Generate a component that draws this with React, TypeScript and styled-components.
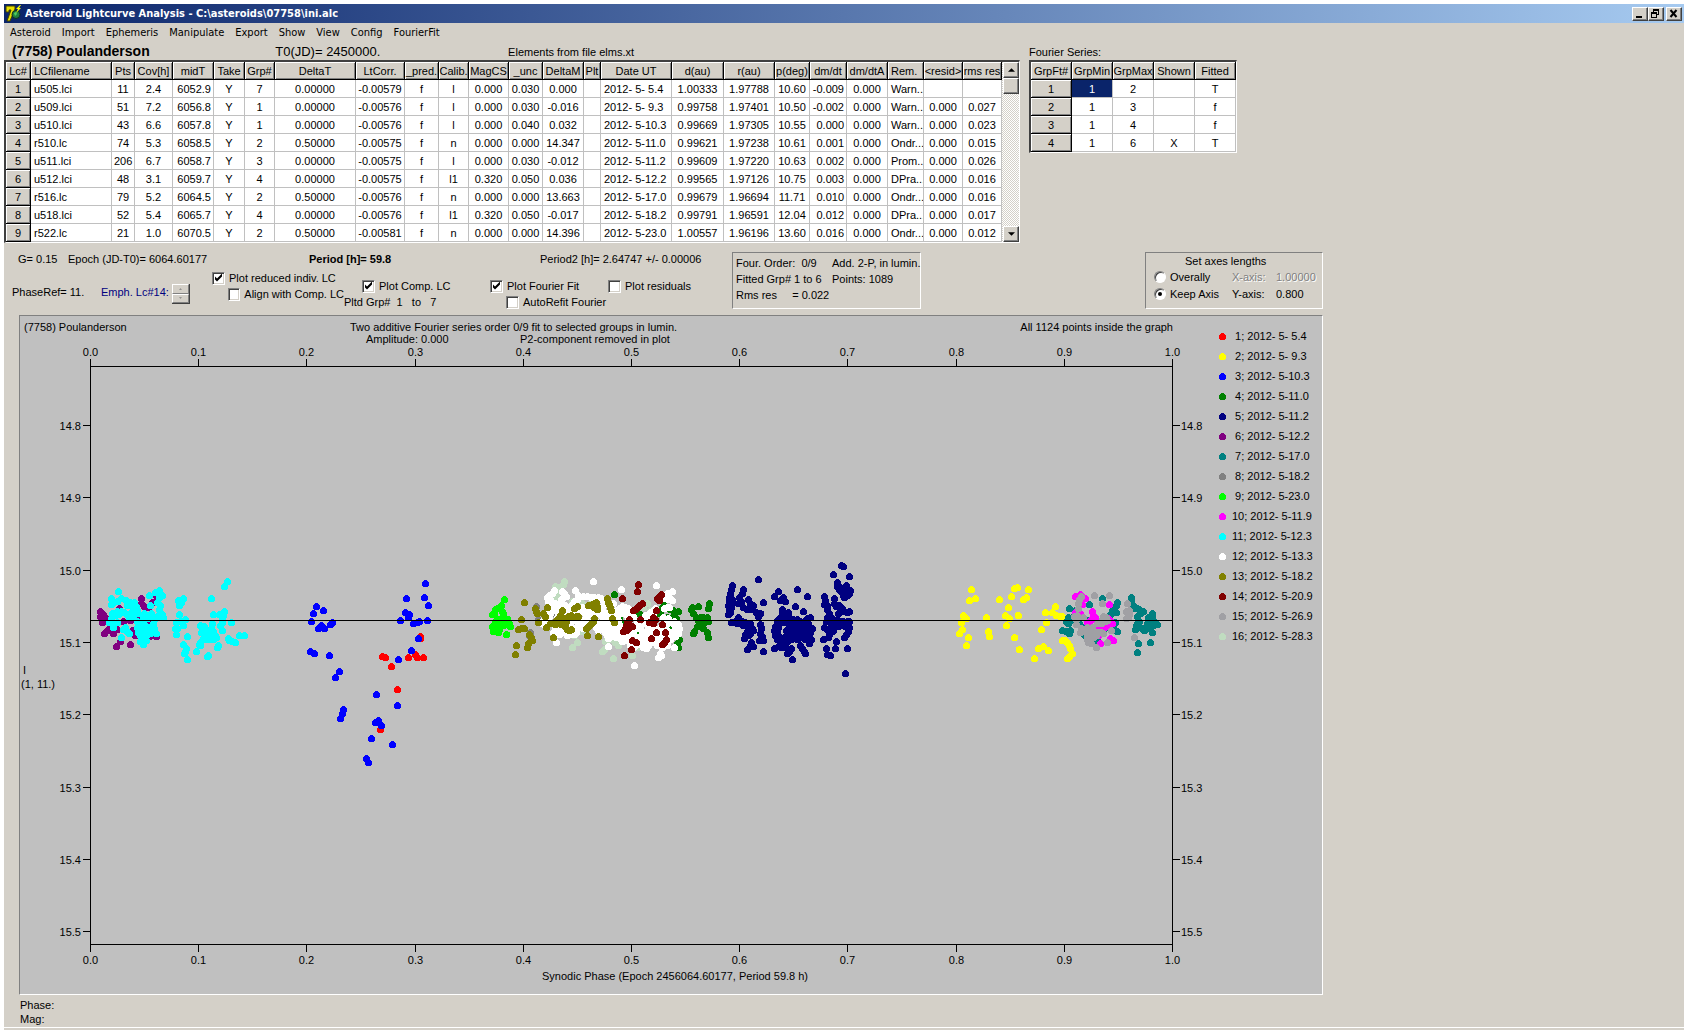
import React from 'react';
import styled, { createGlobalStyle, css } from 'styled-components';

const face = '#d4d0c8';
const shadow = '#808080';
const dark = '#404040';
const uiFont = '"Liberation Sans", Arial, sans-serif';
const titleFont = '"DejaVu Sans Condensed", "DejaVu Sans", Tahoma, sans-serif';

const GlobalStyle = createGlobalStyle`
  * { box-sizing: border-box; }
  body { margin: 0; background: #fff; font: 11px/14px ${uiFont}; color: #000; }
  button, input { font: inherit; color: inherit; }
`;

const raised = css`
  background: ${face};
  border: 1px solid;
  border-color: #fff ${dark} ${dark} #fff;
  box-shadow: inset -1px -1px ${shadow};
`;

/* ---------- window frame ---------- */

const Window = styled.div`
  display: flex;
  flex-direction: column;
  min-height: 100vh;
  background: ${face};
  border: solid #fff;
  border-width: 4px 4px 0;
`;

const TitleBar = styled.header`
  display: flex;
  align-items: center;
  height: 19px;
  padding: 0 2px 0 1px;
  background: linear-gradient(to right, #0a246a, #a6caf0);
  color: #fff;
`;

const TitleText = styled.h1`
  flex: 1;
  margin: 0 0 0 3px;
  font: bold 11px/18px ${titleFont};
  white-space: nowrap;
`;

const CaptionButton = styled.button<{ $gap?: number }>`
  ${raised}
  display: flex;
  width: 16px;
  height: 14px;
  padding: 0;
  margin-left: ${(p) => p.$gap ?? 0}px;
`;

const MenuBar = styled.nav`
  display: flex;
  gap: 11px;
  height: 20px;
  padding-left: 6px;
`;

const MenuButton = styled.button`
  padding: 0;
  border: 0;
  background: none;
  font: 11px/20px ${titleFont};
`;

/* ---------- data grids ---------- */

const Tables = styled.div`
  display: flex;
  gap: 9px;
`;

const TableBlock = styled.section`
  display: flex;
  flex-direction: column;
`;

const Heading = styled.div`
  display: flex;
  align-items: center;
  height: 17px;
  white-space: nowrap;
`;

const AsteroidName = styled.h2`
  width: 264px;
  margin: 0;
  padding-left: 8px;
  font: bold 14px/17px ${uiFont};
`;

const Epoch0 = styled.span`
  width: 234px;
  font-size: 13px;
`;

const Sunken = styled.div`
  display: flex;
  border: solid;
  border-width: 2px 1px 1px 2px;
  border-color: ${dark} #fff #fff ${dark};
  background: #fff;
`;

const Grid = styled.table<{ $width: number }>`
  width: ${(p) => p.$width}px;
  table-layout: fixed;
  border-collapse: separate;
  border-spacing: 0;
`;

type Align = 'left' | 'center' | 'right';

const HeadCell = styled.th<{ $align?: Align }>`
  height: 18px;
  padding: 0 ${(p) => (p.$align === 'left' ? 3 : 0)}px;
  overflow: hidden;
  background: ${face};
  border: solid #000;
  border-width: 0 1px 1px 0;
  box-shadow: inset 1px 1px #fff, inset -1px -1px ${shadow};
  font-weight: normal;
  line-height: 16px;
  text-align: ${(p) => p.$align ?? 'center'};
  white-space: nowrap;
`;

const Cell = styled.td<{ $align?: Align; $selected?: boolean }>`
  height: 18px;
  padding: 0 ${(p) => (p.$align === 'left' ? 3 : 2)}px;
  overflow: hidden;
  border: solid #c0c0c0;
  border-width: 0 1px 1px 0;
  background: ${(p) => (p.$selected ? '#0a246a' : '#fff')};
  color: ${(p) => (p.$selected ? '#fff' : '#000')};
  line-height: 16px;
  text-align: ${(p) => p.$align ?? 'center'};
  white-space: pre;
`;

const ScrollBar = styled.div`
  display: flex;
  flex-direction: column;
  width: 17px;
  padding-left: 1px;
  background: repeating-conic-gradient(#fff 0 25%, ${face} 0 50%) 0 0 / 2px 2px;
`;

const ScrollButton = styled.button`
  ${raised}
  display: flex;
  align-items: center;
  justify-content: center;
  height: 16px;
  padding: 0;
`;

const Thumb = styled.div`
  ${raised}
  height: 16px;
  margin-bottom: auto;
`;

/* ---------- options strip ---------- */

const Options = styled.section`
  display: flex;
  height: 72px;
  padding-top: 9px;
  white-space: pre;
`;

const Controls = styled.div`
  width: 728px;
`;

const Summary = styled.div`
  display: grid;
  grid-template-columns: 50px 241px 231px auto;
  padding-left: 14px;
`;

const Settings = styled.div`
  display: grid;
  grid-template-columns: 89px 71px 40px 132px 146px 118px auto;
  padding: 4px 0 0 8px;
  line-height: 16px;
`;

const Stack = styled.div<{ $top?: number; $navy?: boolean }>`
  padding-top: ${(p) => p.$top ?? 0}px;
  color: ${(p) => (p.$navy ? '#000080' : '#000')};
`;

const Option = styled.label<{ $indent?: number }>`
  display: flex;
  align-items: center;
  gap: 4px;
  height: 16px;
  margin-left: ${(p) => p.$indent ?? 0}px;
`;

const CheckBox = styled.input`
  appearance: none;
  width: 13px;
  height: 13px;
  margin: 0;
  border: 1px solid;
  border-color: ${shadow} #fff #fff ${shadow};
  box-shadow: inset 1px 1px ${dark}, inset -1px -1px ${face};
  background: #fff;

  &:checked::before {
    content: '';
    display: block;
    width: 11px;
    height: 11px;
    background: #000;
    clip-path: polygon(2px 4px, 4px 6px, 9px 1px, 9px 4px, 4px 9px, 2px 7px);
  }
`;

const Radio = styled.input`
  appearance: none;
  display: grid;
  place-items: center;
  width: 12px;
  height: 12px;
  margin: 0;
  border: 1px solid;
  border-color: ${shadow} #fff #fff ${shadow};
  border-radius: 50%;
  box-shadow: inset 1px 1px ${dark};
  background: #fff;

  &:checked::before {
    content: '';
    width: 4px;
    height: 4px;
    border-radius: 50%;
    background: #000;
  }
`;

const Spinner = styled.div`
  display: flex;
  flex-direction: column;
  width: 18px;
  height: 20px;
  margin-top: 14px;
  border: solid ${dark};
  border-width: 0 1px 1px 0;
`;

const SpinButton = styled.button`
  ${raised}
  display: flex;
  flex: 1;
  align-items: center;
  justify-content: center;
  padding: 0;
  border-color: #fff ${shadow} ${shadow} #fff;
  box-shadow: none;
`;

const InsetBox = styled.div<{ $width: number; $gap?: number }>`
  width: ${(p) => p.$width}px;
  height: 57px;
  margin-left: ${(p) => p.$gap ?? 0}px;
  padding: 2px 0 0 3px;
  border: 1px solid;
  border-color: ${shadow} #fff #fff ${shadow};
  line-height: 16px;
`;

const FitGrid = styled.div`
  display: grid;
  grid-template-columns: 96px auto;
`;

const AxesTitle = styled.div`
  padding-left: 36px;
  line-height: 13px;
`;

const AxesRow = styled.div<{ $off?: boolean }>`
  display: grid;
  grid-template-columns: 78px 44px 44px;
  align-items: center;
  height: 17px;
  padding-left: 5px;

  & > :nth-child(n + 2) {
    color: ${(p) => (p.$off ? shadow : '#000')};
    text-shadow: ${(p) => (p.$off ? '1px 1px #fff' : 'none')};
  }
`;

const ValueInput = styled.input`
  width: 44px;
  padding: 0;
  border: 0;
  background: none;
`;

/* ---------- graph ---------- */

const GraphPanel = styled.main`
  width: 1304px;
  max-width: calc(100% - 15px);
  margin-left: 15px;
  background: #c0c0c0;
  border: 1px solid;
  border-color: ${shadow} #fff #fff ${shadow};
`;

const Graph = styled.svg`
  display: block;
  width: 100%;
  height: auto;
  font: 11px ${uiFont};

  text { white-space: pre; }
  line { stroke: #000; shape-rendering: crispEdges; }
  circle { shape-rendering: crispEdges; }
`;

const StatusArea = styled.footer`
  flex: 1;
  padding: 3px 0 0 16px;
  margin-bottom: 2px;
  border-bottom: 1px solid #fff;
`;

/* ---------- contents ---------- */

type Column = { name: string; width: number; align?: Align; headAlign?: Align };

const lcColumns: Column[] = [
  { name: 'Lc#', width: 25 },
  { name: 'LCfilename', width: 81, align: 'left', headAlign: 'left' },
  { name: 'Pts', width: 23 },
  { name: 'Cov[h]', width: 38 },
  { name: 'midT', width: 41, align: 'right' },
  { name: 'Take', width: 31 },
  { name: 'Grp#', width: 30 },
  { name: 'DeltaT', width: 81 },
  { name: 'LtCorr.', width: 49 },
  { name: '_pred.', width: 34 },
  { name: 'Calib.', width: 30 },
  { name: 'MagCS', width: 40 },
  { name: '_unc', width: 34 },
  { name: 'DeltaM', width: 41 },
  { name: 'Plt', width: 17 },
  { name: 'Date UT', width: 71, align: 'left' },
  { name: 'd(au)', width: 52 },
  { name: 'r(au)', width: 51 },
  { name: 'p(deg)', width: 35 },
  { name: 'dm/dt', width: 37, align: 'right' },
  { name: 'dm/dtA', width: 41 },
  { name: 'Rem.', width: 36, align: 'left', headAlign: 'left' },
  { name: '<resid>', width: 39 },
  { name: 'rms res', width: 39 },
];

const lcRows = [
  '1|u505.lci|11|2.4|6052.9|Y|7|0.00000|-0.00579|f|l|0.000|0.030|0.000||2012- 5- 5.4|1.00333|1.97788|10.60|-0.009|0.000|Warn..||',
  '2|u509.lci|51|7.2|6056.8|Y|1|0.00000|-0.00576|f|l|0.000|0.030|-0.016||2012- 5- 9.3|0.99758|1.97401|10.50|-0.002|0.000|Warn..|0.000|0.027',
  '3|u510.lci|43|6.6|6057.8|Y|1|0.00000|-0.00576|f|l|0.000|0.040|0.032||2012- 5-10.3|0.99669|1.97305|10.55|0.000|0.000|Warn..|0.000|0.023',
  '4|r510.lc|74|5.3|6058.5|Y|2|0.50000|-0.00575|f|n|0.000|0.000|14.347||2012- 5-11.0|0.99621|1.97238|10.61|0.001|0.000|Ondr...|0.000|0.015',
  '5|u511.lci|206|6.7|6058.7|Y|3|0.00000|-0.00575|f|l|0.000|0.030|-0.012||2012- 5-11.2|0.99609|1.97220|10.63|0.002|0.000|Prom...|0.000|0.026',
  '6|u512.lci|48|3.1|6059.7|Y|4|0.00000|-0.00575|f|l1|0.320|0.050|0.036||2012- 5-12.2|0.99565|1.97126|10.75|0.003|0.000|DPra...|0.000|0.016',
  '7|r516.lc|79|5.2|6064.5|Y|2|0.50000|-0.00576|f|n|0.000|0.000|13.663||2012- 5-17.0|0.99679|1.96694|11.71|0.010|0.000|Ondr...|0.000|0.016',
  '8|u518.lci|52|5.4|6065.7|Y|4|0.00000|-0.00576|f|l1|0.320|0.050|-0.017||2012- 5-18.2|0.99791|1.96591|12.04|0.012|0.000|DPra...|0.000|0.017',
  '9|r522.lc|21|1.0|6070.5|Y|2|0.50000|-0.00581|f|n|0.000|0.000|14.396||2012- 5-23.0|1.00557|1.96196|13.60|0.016|0.000|Ondr...|0.000|0.012',
].map((r) => r.split('|'));

const fourierColumns: Column[] = ['GrpFt#', 'GrpMin', 'GrpMax', 'Shown', 'Fitted'].map((name) => ({ name, width: 41 }));
const fourierRows = ['1|1|2||T', '2|1|3||f', '3|1|4||f', '4|1|6|X|T'].map((r) => r.split('|'));

function DataGrid({ columns, rows, selected }: { columns: Column[]; rows: string[][]; selected?: [number, number] }) {
  return (
    <Grid $width={columns.reduce((sum, c) => sum + c.width, 0)}>
      <colgroup>
        {columns.map((c) => (
          <col key={c.name} width={c.width} />
        ))}
      </colgroup>
      <thead>
        <tr>
          {columns.map((c) => (
            <HeadCell key={c.name} scope="col" $align={c.headAlign}>
              {c.name}
            </HeadCell>
          ))}
        </tr>
      </thead>
      <tbody>
        {rows.map((row, r) => (
          <tr key={row[0]}>
            {row.map((value, c) =>
              c === 0 ? (
                <HeadCell key={c} scope="row">
                  {value}
                </HeadCell>
              ) : (
                <Cell key={c} $align={columns[c].align} $selected={selected?.[0] === r && selected?.[1] === c}>
                  {value}
                </Cell>
              ),
            )}
          </tr>
        ))}
      </tbody>
    </Grid>
  );
}

const legend: [string, string][] = [
  [' 1; 2012- 5- 5.4', '#ff0000'],
  [' 2; 2012- 5- 9.3', '#ffff00'],
  [' 3; 2012- 5-10.3', '#0000ff'],
  [' 4; 2012- 5-11.0', '#008000'],
  [' 5; 2012- 5-11.2', '#000080'],
  [' 6; 2012- 5-12.2', '#800080'],
  [' 7; 2012- 5-17.0', '#008080'],
  [' 8; 2012- 5-18.2', '#808080'],
  [' 9; 2012- 5-23.0', '#00ff00'],
  ['10; 2012- 5-11.9', '#ff00ff'],
  ['11; 2012- 5-12.3', '#00ffff'],
  ['12; 2012- 5-13.3', '#ffffff'],
  ['13; 2012- 5-18.2', '#808000'],
  ['14; 2012- 5-20.9', '#800000'],
  ['15; 2012- 5-26.9', '#a0a0a4'],
  ['16; 2012- 5-28.3', '#c0dcc0'],
];

/* Samples are "x,y" pairs in thirds of a plot unit, counted from the series' own origin. */
type Series = { id: number; x: number; y: number; samples: string };

const series: Series[] = [
  { id: 16, x: 470, y: 560, samples: '281,63 278,73 256,78 254,90 258,105 252,118 268,80 305,122 335,128 350,140 530,130 520,142 330,212 322,247 307,262 312,226 395,274 402,268 430,295 404,244 420,238 436,246 445,254 487,286 500,262 540,150 545,165 320,200 345,215 360,130' },
  { id: 1, x: 80, y: 560, samples: '1021,227 1019,234 905,289 916,292 985,292 1006,281 1012,292 1030,292 934,319 952,388 901,508' },
  { id: 2, x: 930, y: 560, samples: '124,88 118,121 136,115 208,118 244,109 251,85 260,82 295,88 289,112 280,118 235,142 100,166 107,175 92,187 95,208 86,219 115,232 109,256 169,172 175,214 178,229 226,166 238,174 229,196 265,166 253,232 268,268 313,295 374,139 346,157 365,157 379,166 389,167 397,168 349,187 334,208 325,265 340,259 355,271 397,241 404,241 410,247 416,254 421,263 425,280 418,287 412,293' },
  { id: 3, x: 80, y: 560, samples: '1036,70 1033,112 979,115 1045,136 709,139 730,151 700,160 694,184 757,187 751,193 724,196 715,205 733,205 691,274 703,280 748,286 778,334 766,352 790,448 787,460 781,475 976,157 988,163 985,170 961,181 1000,190 1010,187 1018,184 1042,181 1015,235 994,271 955,298 889,403 952,436 895,481 886,487 904,496 874,535 937,553 859,595 865,607' },
  { id: 4, x: 470, y: 560, samples: '433,103 574,103 575,140 582,135 600,148 607,170 618,175 625,154 612,172 510,162 520,172 496,155 628,238 625,262 622,250 665,142 684,139 718,130 715,145 663,148 668,160 677,172 685,180 690,170 700,170 712,172 714,183 700,190 690,192 680,198 672,212 669,219 700,205 710,215 714,230 560,160 570,155 590,170 462,205 447,175 455,190 480,228 470,150 505,220 565,150 600,200 610,150 545,225' },
  { id: 5, x: 700, y: 550, samples: '97,106 92,118 90,128 86,140 96,148 86,152 95,160 85,165 94,172 88,180 85,192 90,186 130,118 126,130 118,142 122,154 115,160 128,172 145,148 150,160 160,166 155,176 140,178 168,186 180,190 175,198 188,157 175,88 94,217 106,214 115,200 120,210 112,220 125,212 135,215 128,225 140,220 150,218 145,230 155,235 140,242 158,240 150,250 135,252 145,256 133,265 180,222 184,234 180,248 186,258 176,271 189,271 190,304 152,276 150,286 158,287 142,298 233,124 223,139 292,118 322,139 250,142 240,150 256,154 286,169 310,184 247,178 245,190 265,187 255,198 240,202 232,210 270,205 280,208 290,206 300,212 320,205 331,202 315,210 325,220 240,215 252,215 265,216 278,220 290,218 302,222 224,228 234,230 221,240 230,246 224,256 236,258 232,268 252,260 262,256 270,250 258,240 268,232 280,235 276,245 288,230 292,242 286,252 300,236 305,248 312,238 320,232 335,235 330,246 318,250 325,258 333,266 328,278 316,268 305,262 292,266 282,262 272,268 260,272 250,274 298,258 288,226 308,228 221,295 235,288 243,292 258,292 272,295 268,302 262,310 301,286 306,294 311,302 314,310 277,328 373,139 374,150 372,162 380,165 382,178 386,188 403,145 402,158 408,168 418,164 425,175 433,183 446,184 440,185 413,190 392,200 400,206 380,202 378,212 390,215 402,215 412,208 420,212 430,214 442,213 447,214 372,232 382,238 390,232 396,244 388,252 384,260 400,240 404,228 414,228 425,225 436,228 446,232 444,242 438,252 433,260 370,268 409,274 379,295 406,295 442,295 380,313 391,316 436,370 422,46 428,49 400,73 448,79 412,97 412,108 420,112 428,114 438,104 440,114 422,122 432,124 442,124 450,121 430,134 440,134 432,140 446,130 418,118' },
  { id: 6, x: 80, y: 560, samples: '61,154 70,161 61,168 76,170 66,178 67,187 78,180 73,219 80,211 88,205 100,219 112,206 96,210 107,259 121,242 151,253 184,115 184,130 191,138 221,103 215,127 117,143 164,225 156,210 206,228 227,228 200,184 178,170 150,180 130,184 205,140 232,115' },
  { id: 7, x: 930, y: 560, samples: '478,133 515,115 418,145 435,150 560,125 557,135 553,145 558,155 545,150 540,162 413,172 408,182 430,180 425,172 415,190 397,211 409,212 420,210 416,220 447,190 455,200 562,214 555,185 548,195 540,205 530,200 520,210 500,238 495,245 487,250 460,220 465,225 535,190 603,112 603,120 598,125 608,135 612,145 622,145 628,148 630,158 640,153 620,168 655,172 665,168 667,160 626,182 662,180 668,196 675,186 682,193 622,190 650,190 618,195 615,208 635,205 642,210 665,217 625,250 661,247 622,277 654,205 470,180 480,195' },
  { id: 8, x: 470, y: 560, samples: '197,138 194,145 179,216 203,178 178,225 250,160' },
  { id: 9, x: 470, y: 560, samples: '103,118 92,136 82,143 75,148 71,163 67,163 95,154 100,160 87,178 75,183 85,187 98,180 112,177 118,190 120,199 100,195 90,198 78,195 66,199 75,205 87,208 70,213 85,217 109,223 105,190' },
  { id: 10, x: 930, y: 560, samples: '451,103 436,109 466,115 455,133 445,158 436,155 451,160 487,154 490,165 495,172 470,187 480,180 500,185 510,195 515,200 522,202 530,198 538,192 543,182 535,175 545,188 538,133 495,208 510,250 541,235 549,241 505,225 480,232 460,110 500,215' },
  { id: 11, x: 80, y: 560, samples: '115,94 94,115 94,131 122,115 110,122 100,126 137,121 150,127 163,127 142,136 155,138 168,138 110,152 122,152 131,157 95,160 104,165 115,162 92,175 86,187 100,190 110,185 99,201 140,162 150,160 160,155 170,150 175,160 148,172 160,172 170,182 182,185 190,175 180,195 170,202 195,195 205,168 212,160 200,175 215,172 192,160 128,207 142,213 148,219 135,200 124,232 238,91 247,106 237,112 226,97 208,106 230,125 241,136 211,136 236,148 246,162 248,170 232,168 222,178 218,190 222,205 229,219 214,205 205,210 195,210 184,215 190,225 200,222 210,218 180,225 175,215 181,244 190,252 199,241 208,200 188,205 310,115 295,121 304,126 298,136 298,163 316,178 289,187 299,182 308,196 284,205 292,204 289,223 322,229 310,253 319,265 315,272 313,280 322,298 442,64 433,79 394,115 433,154 400,163 418,163 430,165 427,175 425,186 452,187 397,190 420,195 361,196 373,198 366,205 364,215 392,205 384,212 375,216 400,213 394,222 404,225 384,226 377,236 390,238 400,236 408,230 370,235 427,211 361,245 358,252 361,256 349,274 415,256 411,262 385,284 380,288 445,234 448,240 457,243 464,245 478,226 493,226' },
  { id: 12, x: 470, y: 560, samples: '370,64 559,76 454,88 316,91 253,90 247,100 238,105 232,112 240,118 234,122 275,92 282,100 288,108 280,112 272,118 268,128 262,138 255,128 248,136 258,148 265,155 245,150 240,158 230,156 238,168 226,170 218,180 215,190 222,192 228,180 236,182 325,105 338,107 350,108 362,112 372,110 384,110 392,115 398,120 402,128 320,118 312,124 318,135 305,132 296,140 286,136 278,142 272,150 282,155 292,150 288,165 300,158 308,165 298,175 310,180 300,190 290,182 280,172 262,170 270,185 262,198 255,205 250,215 262,215 268,222 275,210 285,215 290,225 302,222 312,222 318,215 312,205 300,205 259,247 322,160 330,152 340,148 335,140 345,160 350,150 356,162 364,158 372,165 382,160 392,165 402,160 345,175 352,180 340,182 325,190 320,180 332,202 340,205 375,180 370,190 382,185 378,200 388,195 398,190 392,205 402,202 385,210 410,200 405,190 400,175 412,175 412,160 395,145 398,135 420,165 428,155 438,150 448,145 456,138 465,142 473,145 430,130 442,165 452,160 462,158 470,165 480,160 488,168 475,175 445,180 440,190 450,195 445,205 440,215 446,225 438,232 430,220 422,228 415,235 410,225 405,215 418,212 428,208 420,200 425,190 455,215 462,225 450,235 455,242 468,232 472,240 482,222 490,215 498,205 495,195 500,185 505,195 510,205 515,215 505,232 500,245 495,255 488,262 480,255 512,240 520,232 512,252 525,245 522,258 528,265 518,262 535,255 540,245 530,235 522,222 528,212 540,215 535,200 525,190 530,180 520,178 525,165 535,165 540,155 550,165 550,200 555,230 555,245 560,255 565,240 562,230 572,225 568,212 575,210 570,200 582,200 590,210 585,225 580,240 592,245 600,238 595,225 600,215 610,215 605,228 616,228 625,218 628,205 625,192 615,198 608,190 612,182 600,185 592,190 588,180 580,172 595,175 582,145 590,142 598,140 605,94 590,100 598,110 585,115 595,118 607,121 555,145 548,150 548,162 574,285 565,290 570,280 575,262 590,255 612,262 415,259 493,316' },
  { id: 13, x: 470, y: 560, samples: '163,127 232,142 194,145 197,154 200,160 219,160 226,169 154,178 203,187 229,202 161,203 152,205 145,208 178,222 182,232 187,239 175,248 172,260 139,256 136,283 250,232 246,190 255,182 262,176 270,165 275,172 266,186 274,193 281,186 255,192 284,199 290,208 298,209 304,208 295,167 303,165 310,170 318,168 325,168 320,139 312,143 276,150 355,136 365,133 372,130 377,127 372,142 381,139 382,147 412,115 415,125 418,133 421,142 424,150 373,175 370,184 364,188 360,193 354,198 348,203 352,226 385,229 427,175 433,187 240,190 288,182' },
  { id: 14, x: 470, y: 560, samples: '505,73 502,94 457,115 574,103 566,108 562,115 566,121 515,130 507,136 500,141 494,146 488,150 557,151 476,178 472,186 468,195 464,203 460,212 478,196 485,199 475,205 467,210 511,178 550,172 555,177 547,182 538,187 549,190 575,193 559,217 586,217 544,235 589,238 582,245 577,253 487,240 497,247 484,268 463,286' },
  { id: 15, x: 930, y: 560, samples: '493,106 538,106 515,130 453,108 447,118 444,128 445,145 432,168 442,165 438,178 439,192 460,170 590,130 588,152 598,150 598,162 587,175 595,170 520,168 528,172 515,178 525,182 512,188 532,180 500,190 452,205 450,215 462,208 470,200 478,205 485,200 490,210 478,215 468,215 472,228 470,238 480,225 490,220 505,215 512,215 520,218 497,225 475,245 482,250 499,260 532,247 543,209 613,232 488,230' },
];

const plot = { left: 70, right: 1152, top: 50, bottom: 628, meanY: 304 };
const phases = Array.from({ length: 11 }, (_, i) => i);
const magnitudes = Array.from({ length: 8 }, (_, i) => i);

function Lightcurve() {
  return (
    <Graph viewBox="0 0 1302 678" role="img" aria-label="Lightcurve plot">
      <text x="4" y="15">(7758) Poulanderson</text>
      <text x="330" y="15">Two additive Fourier series order 0/9 fit to selected groups in lumin.</text>
      <text x="346" y="27">Amplitude: 0.000</text>
      <text x="500" y="27">P2-component removed in plot</text>
      <text x="1153" y="15" textAnchor="end">All 1124 points inside the graph</text>

      {series.map((s) => (
        <g key={s.id} fill={legend[s.id - 1][1]}>
          {s.samples.split(' ').map((pair, i) => {
            const [x, y] = pair.split(',').map(Number);
            return <circle key={i} cx={Math.round(s.x - 20 + x / 3) + 0.5} cy={Math.round(s.y - 316 + y / 3) + 0.5} r="3.5" />;
          })}
        </g>
      ))}

      <line x1={plot.left} x2={plot.right + 1} y1={plot.top + 0.5} y2={plot.top + 0.5} />
      <line x1={plot.left} x2={plot.right + 1} y1={plot.bottom + 0.5} y2={plot.bottom + 0.5} />
      <line x1={plot.left} x2={plot.right + 1} y1={plot.meanY + 0.5} y2={plot.meanY + 0.5} />
      <line x1={plot.left + 0.5} x2={plot.left + 0.5} y1={plot.top} y2={plot.bottom} />
      <line x1={plot.right + 0.5} x2={plot.right + 0.5} y1={plot.top} y2={plot.bottom} />

      {phases.map((i) => {
        const x = Math.round(plot.left + i * 108.2) + 0.5;
        return (
          <g key={i} textAnchor="middle">
            <line x1={x} x2={x} y1={plot.top - 7} y2={plot.top} />
            <line x1={x} x2={x} y1={plot.bottom} y2={plot.bottom + 8} />
            <text x={x} y="40">{(i / 10).toFixed(1)}</text>
            <text x={x} y="648">{(i / 10).toFixed(1)}</text>
          </g>
        );
      })}
      {magnitudes.map((i) => {
        const y = Math.round(109 + i * 72.3) + 0.5;
        return (
          <g key={i}>
            <line x1={plot.left - 7} x2={plot.left} y1={y} y2={y} />
            <line x1={plot.right} x2={plot.right + 8} y1={y} y2={y} />
            <text x="61" y={y + 4} textAnchor="end">{(14.8 + i / 10).toFixed(1)}</text>
            <text x="1161" y={y + 4}>{(14.8 + i / 10).toFixed(1)}</text>
          </g>
        );
      })}

      <text x="3" y="358">I</text>
      <text x="1" y="372">(1, 11.)</text>
      <text x="522" y="664">Synodic Phase (Epoch 2456064.60177, Period 59.8 h)</text>

      {legend.map(([label, color], i) => (
        <g key={label}>
          <circle cx="1202.5" cy={20.5 + i * 20} r="3.5" fill={color} />
          <text x="1212" y={24 + i * 20}>{label}</text>
        </g>
      ))}
    </Graph>
  );
}

const menus = ['Asteroid', 'Import', 'Ephemeris', 'Manipulate', 'Export', 'Show', 'View', 'Config', 'FourierFit'];

function Arrow({ up, size, color = '#000' }: { up?: boolean; size: number; color?: string }) {
  return (
    <svg width={size * 2 - 1} height={size} viewBox={`0 0 ${size * 2} ${size}`} aria-hidden="true">
      <path d={up ? `M0 ${size}L${size} 0L${size * 2} ${size}Z` : `M0 0H${size * 2}L${size} ${size}Z`} fill={color} />
    </svg>
  );
}

function AppIcon() {
  return (
    <svg width="17" height="17" viewBox="0 0 17 17" aria-hidden="true">
      <path d="M1 1h9v3L5 16H2L6 5H4v2H1Z" fill="#e8e000" stroke="#404000" />
      <circle cx="11" cy="9.500" r="4" fill="#208040" stroke="#103020" />
      <path d="M9 8l2-1 1 2-2 2Z" fill="#50d060" />
      <path d="M15 0l-4 4h2l-2 4 5-5h-2l2-3Z" fill="#ffff00" />
    </svg>
  );
}

export default function App() {
  return (
    <>
      <GlobalStyle />
      <Window>
        <TitleBar>
          <AppIcon />
          <TitleText>Asteroid Lightcurve Analysis - C:\asteroids\07758\ini.alc</TitleText>
          <CaptionButton aria-label="Minimize">
            <svg width="14" height="12" viewBox="0 0 14 12"><path d="M3 8h6v2H3Z" /></svg>
          </CaptionButton>
          <CaptionButton aria-label="Restore">
            <svg width="14" height="12" viewBox="0 0 14 12" shapeRendering="crispEdges">
              <path d="M4 1h6v6H8V6h1V3H5v1H4ZM2 4h6v6H2ZM3 6v3h4V6Z" fillRule="evenodd" />
            </svg>
          </CaptionButton>
          <CaptionButton aria-label="Close" $gap={2}>
            <svg width="14" height="12" viewBox="0 0 14 12">
              <path d="M3.500 2l6 7M9.500 2l-6 7" stroke="#000" strokeWidth="2" />
            </svg>
          </CaptionButton>
        </TitleBar>
        <MenuBar>
          {menus.map((m) => (
            <MenuButton key={m}>{m}</MenuButton>
          ))}
        </MenuBar>

        <Tables>
          <TableBlock>
            <Heading>
              <AsteroidName>(7758) Poulanderson</AsteroidName>
              <Epoch0>&nbsp;&nbsp;T0(JD)= 2450000.</Epoch0>
              <span>&nbsp;&nbsp;Elements from file elms.xt</span>
            </Heading>
            <Sunken>
              <DataGrid columns={lcColumns} rows={lcRows} />
              <ScrollBar>
                <ScrollButton aria-label="Scroll up"><Arrow up size={4} /></ScrollButton>
                <Thumb />
                <ScrollButton aria-label="Scroll down"><Arrow size={4} /></ScrollButton>
              </ScrollBar>
            </Sunken>
          </TableBlock>
          <TableBlock>
            <Heading>Fourier Series:</Heading>
            <Sunken>
              <DataGrid columns={fourierColumns} rows={fourierRows} selected={[0, 1]} />
            </Sunken>
          </TableBlock>
        </Tables>

        <Options>
          <Controls>
            <Summary>
              <span>G= 0.15</span>
              <span>Epoch (JD-T0)= 6064.60177</span>
              <b>Period [h]= 59.8</b>
              <span>Period2 [h]= 2.64747 +/- 0.00006</span>
            </Summary>
            <Settings>
              <Stack $top={14}>PhaseRef= 11.</Stack>
              <Stack $top={14} $navy>Emph. Lc#14:</Stack>
              <Spinner>
                <SpinButton aria-label="Next lightcurve"><Arrow up size={2} color={shadow} /></SpinButton>
                <SpinButton aria-label="Previous lightcurve"><Arrow size={2} color={shadow} /></SpinButton>
              </Spinner>
              <Stack>
                <Option><CheckBox type="checkbox" defaultChecked />Plot reduced indiv. LC</Option>
                <Option $indent={16}><CheckBox type="checkbox" />Align with Comp. LC</Option>
              </Stack>
              <Stack $top={8}>
                <Option $indent={18}><CheckBox type="checkbox" defaultChecked />Plot Comp. LC</Option>
                <div>{'Pltd Grp#  1   to   7'}</div>
              </Stack>
              <Stack $top={8}>
                <Option><CheckBox type="checkbox" defaultChecked />Plot Fourier Fit</Option>
                <Option $indent={16}><CheckBox type="checkbox" />AutoRefit Fourier</Option>
              </Stack>
              <Stack $top={8}>
                <Option><CheckBox type="checkbox" />Plot residuals</Option>
              </Stack>
            </Settings>
          </Controls>
          <InsetBox $width={189}>
            <FitGrid>
              <span>{'Four. Order:  0/9'}</span>
              <span>Add. 2-P, in lumin.</span>
              <span>Fitted Grp# 1 to 6</span>
              <span>Points: 1089</span>
              <span>{'Rms res     = 0.022'}</span>
            </FitGrid>
          </InsetBox>
          <InsetBox $width={178} $gap={224}>
            <AxesTitle>Set axes lengths</AxesTitle>
            <AxesRow $off>
              <Option><Radio type="radio" name="axes" />Overally</Option>
              <label htmlFor="x-axis">X-axis:</label>
              <ValueInput id="x-axis" defaultValue="1.00000" disabled />
            </AxesRow>
            <AxesRow>
              <Option><Radio type="radio" name="axes" defaultChecked />Keep Axis</Option>
              <label htmlFor="y-axis">Y-axis:</label>
              <ValueInput id="y-axis" defaultValue="0.800" />
            </AxesRow>
          </InsetBox>
        </Options>

        <GraphPanel>
          <Lightcurve />
        </GraphPanel>
        <StatusArea>
          <div>Phase:</div>
          <div>Mag:</div>
        </StatusArea>
      </Window>
    </>
  );
}
